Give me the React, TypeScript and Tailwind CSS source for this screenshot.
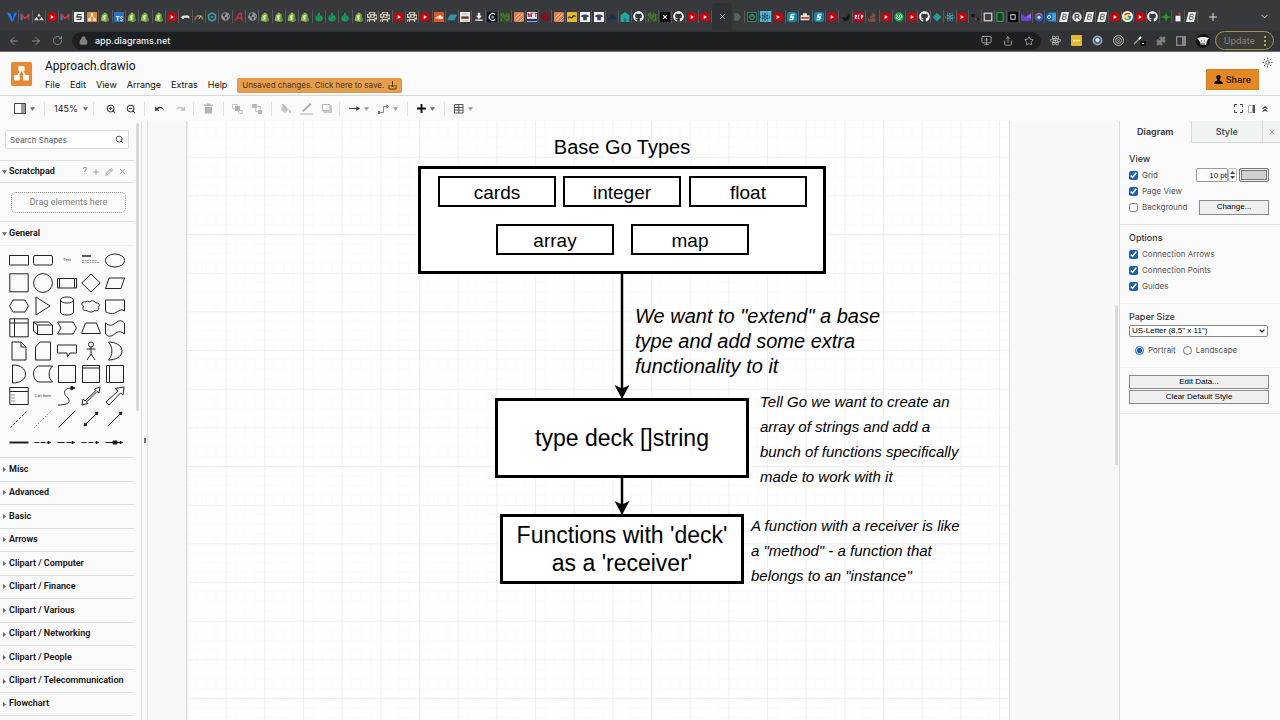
import type { ReactNode } from "react";
import { FaGithub, FaReact, FaSoundcloud, FaStackOverflow, FaGlobeAmericas } from "react-icons/fa";
import { FcGoogle } from "react-icons/fc";
import {
  ArrowLeft, ArrowRight, RotateCw, Lock, X, Plus, ChevronDown, MonitorDown, Share, Star, Puzzle,
  ZoomIn, ZoomOut, Search, Sun, ChevronsUp, Pencil,
} from "lucide-react";

/* ---------- tab favicons ---------- */

const Fav = ({ children }: { children: ReactNode }) => (
  <svg viewBox="0 0 16 16" className="h-[10px] w-[10px] shrink-0" aria-hidden="true">{children}</svg>
);

const favicons: Record<string, ReactNode> = {
  vue: <Fav><path d="M0 1h5l3 7 3-7h5L9 15H7z" fill="#2a7de1" /><path d="M7 3l5-2-4 12z" fill="#0f3f8a" /></Fav>,
  gmail: <Fav><path d="M1 3h3v10H1z" fill="#4c7fe0" /><path d="M12 3h3v10h-3z" fill="#7a4a58" /><path d="M1 2.500l7 5.500 7-5.500V6l-7 5.500L1 6z" fill="#c93d3a" /></Fav>,
  triad: <Fav><path d="M8 2l3 5H5zM4 8l4 5H0zM12 8l4 5H8z" fill="#d6d9da" /></Fav>,
  yt: <Fav><rect y="1" width="16" height="14" rx="5" fill="#bd0a12" /><path d="M6 5l5 3-5 3z" fill="#fff" /></Fav>,
  sq: <Fav><rect width="16" height="16" rx="1" fill="#f1f1f1" /><path d="M12 4H5v4h6v4H4M3 8h10" stroke="#333" strokeWidth="1.6" fill="none" /></Fav>,
  drawio: <Fav><rect width="16" height="16" rx="1" fill="#e4893a" /><path d="M8 5L4.5 11M8 5l3.500 6" stroke="#fff" strokeWidth="1.500" /><path d="M6 2h4v4H6zM2 10h4v4H2zM10 10h4v4h-4z" fill="#fff" /></Fav>,
  shop: <Fav><path d="M3 4h2c.5-3 3-4.500 5-2l2 2 2 10-4 2-9-2z" fill="#86b845" /><path d="M11 3l1 1 2 10-4 2z" fill="#5d8c34" /><path d="M9.500 6.500C6 5 5 8 7 9s1 3.500-2 2" stroke="#fff" strokeWidth="1.700" fill="none" /></Fav>,
  ts: <Fav><rect width="16" height="16" fill="#2f6fbe" /><path d="M3 7.500h6M6 7.500V14M14 8c-3-1.500-4 .5-3 2s3 1 2.500 3-3 1-3.500 0" stroke="#fff" strokeWidth="1.600" fill="none" /></Fav>,
  cat: <Fav><path d="M1 9l3-3 8-1 3 2v3h-2v-1H6v2H4l-1-2z" fill="#e4e6e6" /></Fav>,
  gauge: <Fav><path d="M2 12a6 6 0 0112 0" stroke="#8a9a4a" strokeWidth="2.500" fill="none" /><path d="M2 12a6 6 0 013-5" stroke="#c84040" strokeWidth="2.500" fill="none" /><path d="M8 11l3-5" stroke="#ddd" strokeWidth="1.500" /></Fav>,
  hex: <Fav><path d="M8 1.500l5.500 3.300v6.400L8 14.500l-5.500-3.300V4.800z" fill="none" stroke="#3a9fae" strokeWidth="2.400" /><path d="M6 8h4" stroke="#57bd8c" strokeWidth="2" /></Fav>,
  globe: <FaGlobeAmericas className="h-[9px] w-[9px] shrink-0 text-[#8f9496]" />,
  a: <Fav><path d="M2 14L9 2h2l2 12M4 10h8" stroke="#c32f3b" strokeWidth="2.400" fill="none" /></Fav>,
  pear: <Fav><path d="M7 1h3l-1 4c3 0 5 2 5 5s-2 5-6 5-6-2-6-5 2-4 4-5z" fill="#189a5b" /><path d="M5 8h2M9 11h2" stroke="#0c5b38" strokeWidth="1.500" /></Fav>,
  pixel: <Fav><rect width="16" height="16" fill="#d5d0bf" /><path d="M0 0h3v3H0zM5 1h6v2H5zM13 0h3v4h-3zM2 4h3v3H2zM7 5h3v3H7zM12 6h3v3h-3zM0 9h3v3H0zM4 9h8v2H4zM5 13h6v3H5zM13 12h3v4h-3zM1 13h2v3H1z" fill="#3e3b34" /></Fav>,
  sound: <span className="flex h-[10px] w-[10px] shrink-0 items-center justify-center bg-[#e0562c]"><FaSoundcloud className="h-[8px] w-[8px] text-white" /></span>,
  para: <Fav><path d="M5 4h11l-4 9H0z" fill="#3295a5" /></Fav>,
  host: <Fav><rect width="16" height="16" fill="#ece8e4" /><path d="M2 7h12v4H2z" fill="#6d4038" /><path d="M3 3h10M3 14h10" stroke="#a89c95" /></Fav>,
  down: <Fav><path d="M6 1h4v5h3l-5 5-5-5h3zM2 12h12v2H2z" fill="#f2f2f2" /></Fav>,
  c: <Fav><rect width="16" height="16" fill="#11151c" /><path d="M13 4a5.500 5.500 0 100 8" stroke="#dfe6ee" strokeWidth="2" fill="none" /><circle cx="9" cy="8" r="2.500" fill="#6b8fb3" /></Fav>,
  matrix: <Fav><rect width="16" height="16" fill="#2f4a26" /><path d="M2 2v5M5 1v9M8 4v8M11 2v6M14 3v11M2 10v5M11 11v4" stroke="#5c8c3a" strokeWidth="1.600" /></Fav>,
  stripe: <Fav><rect width="16" height="16" rx="2" fill="#dd7c4e" /><path d="M2 9l7-7M3 14L14 3M9 15l6-6" stroke="#f6d9c5" strokeWidth="1.500" /></Fav>,
  nft: <Fav><rect width="16" height="16" fill="#e9e5ef" /><path d="M0 11h16v4H0z" fill="#2a2f6b" /><path d="M2 8V2l3 6V2M7 8V2h3M12 2h4M14 2v6" stroke="#a3182a" strokeWidth="1.500" fill="none" /></Fav>,
  maroon: <Fav><circle cx="8" cy="8" r="7" fill="#7a1420" /></Fav>,
  yellow: <Fav><rect width="16" height="16" rx="1" fill="#e3b92c" /><path d="M2 10c3-5 5 2 7-2s3-1 5-1" stroke="#30302a" strokeWidth="2" fill="none" /></Fav>,
  phone: <Fav><rect width="16" height="16" fill="#eef0f4" /><path d="M1 7c3-4 11-4 14 0l-3 1H4zM5 8h6v5H5z" fill="#3c4560" /></Fav>,
  cloud: <Fav><path d="M1 12V9l3-1 3-3 4 1 4 3v3z" fill="#1c2b57" /></Fav>,
  house: <Fav><path d="M8 0l7 5v11H1V5z" fill="#1fa9a0" /><path d="M6 10h4v6H6z" fill="#137a76" /></Fav>,
  git: <FaGithub className="h-[11px] w-[11px] shrink-0 text-[#f2f3f3]" />,
  x: <Fav><rect width="16" height="16" fill="#050505" /><path d="M5 5l6 6M11 5l-6 6" stroke="#fff" strokeWidth="2" /></Fav>,
  d: <Fav><path d="M2 2h6l5 6-5 6H2z" fill="#5c6062" /></Fav>,
  openai: <Fav><rect x=".7" y=".7" width="14.600" height="14.600" fill="#1e3a33" stroke="#3f8b6c" strokeWidth="1.200" /><path d="M8 4l3.500 2v4L8 12l-3.500-2V6zM8 8V4" fill="none" stroke="#58ad8a" strokeWidth="1.300" /></Fav>,
  reactBox: <span className="flex h-[11px] w-[11px] shrink-0 items-center justify-center bg-[#57b4cf]"><FaReact className="h-[10px] w-[10px] text-[#143b4c]" /></span>,
  react: <FaReact className="h-[10px] w-[10px] shrink-0 text-[#57b4c8]" />,
  s: <Fav><rect width="16" height="16" rx="4" fill="#1685ae" /><path d="M12 4H7L6 8h4l-1 4H4" stroke="#fff" strokeWidth="2.200" fill="none" /></Fav>,
  brief: <Fav><path d="M5 2h6v3h4v8H1V5h4z" fill="#e4e0da" /><path d="M2 8h12v3H2z" fill="#b7513e" /></Fav>,
  bird: <Fav><path d="M1 8l6 1 6-6 2 2-3 7-6 3z" fill="#15181a" /></Fav>,
  rcp: <Fav><rect width="16" height="16" fill="#a80e21" /><path d="M2 11V5h2v3H2l2 3M9 5H7v6h2M12 11V5h2v3h-2" stroke="#fff" strokeWidth="1.300" fill="none" /></Fav>,
  so: <FaStackOverflow className="h-[10px] w-[10px] shrink-0 text-[#b5603a]" />,
  swirl: <Fav><circle cx="8" cy="8" r="7.500" fill="#21a851" /><path d="M4 4c2 7 8 8 8 3s-5-2-3 1M4 8c0 3 3 5 6 4" stroke="#e4f6e8" strokeWidth="1.500" fill="none" /></Fav>,
  diamond: <Fav><path d="M8 1l7 7-7 7-7-7z" fill="#2a9a94" /></Fav>,
  darkx: <Fav><path d="M2 3h5v5H2zM9 9h5v4H9z" fill="#151515" /><path d="M8 9h3v4H8z" fill="#8a4c32" /></Fav>,
  frame: <Fav><rect x="2" y="2" width="12" height="12" fill="#3f3f40" stroke="#d8d8d6" strokeWidth="2" /></Fav>,
  green: <Fav><rect x="3" y="1" width="10" height="14" rx="1" fill="#1d3b25" stroke="#2f9a4e" strokeWidth="2" /></Fav>,
  blacksq: <Fav><rect width="16" height="16" fill="#070707" /><rect x="4.500" y="4.500" width="7" height="7" fill="none" stroke="#ddd" strokeWidth="1.500" /></Fav>,
  purple: <Fav><path d="M0 2l8 6 8-6v12H0z" fill="#6a45d6" /><path d="M8 8l8-6v8z" fill="#9a6bf0" /></Fav>,
  orb: <Fav><circle cx="8" cy="8" r="7" fill="#3c5cb8" /><path d="M3 5a6 6 0 0110 0" stroke="#c8656a" strokeWidth="2" fill="none" /><circle cx="8" cy="8.500" r="2.500" fill="#d6d9f2" /></Fav>,
  outlook: <Fav><rect x="4" y="1" width="12" height="14" fill="#3aa0e6" /><rect y="3" width="10" height="10" fill="#0f63b8" /><circle cx="5" cy="8" r="2.500" fill="none" stroke="#fff" strokeWidth="1.600" /></Fav>,
  slant: <Fav><path d="M4 0h12l-3 16H0z" fill="#eceded" /><path d="M6.500 3.500H11c1.500 0 1 4-1 4H6M5.500 12H9c3 0 3-4.500 1-4.500M7 3.500L5 12" stroke="#44484a" strokeWidth="1.300" fill="none" /></Fav>,
  r: <Fav><circle cx="8" cy="8" r="7.500" fill="#e6e7e7" /><path d="M5 12V4h4c3 0 3 4 0 4H5M9 8l3 4" stroke="#333" strokeWidth="1.800" fill="none" /></Fav>,
  google: <span className="flex h-[11px] w-[11px] shrink-0 items-center justify-center rounded-full bg-white"><FcGoogle className="h-[9px] w-[9px]" /></span>,
  cross: <Fav><rect width="16" height="16" rx="2" fill="#1f4424" /><path d="M8 1v14M1 8h14" stroke="#4f9b4f" strokeWidth="1.600" /><circle cx="8" cy="8" r="3" fill="none" stroke="#4f9b4f" /></Fav>,
  bottle: <Fav><rect x="4" y="6" width="8" height="9" fill="#f0f0f0" /><path d="M8 1h4v4H8z" fill="#b3362c" /></Fav>,
};

const tabsA = "vue gmail triad yt gmail sq drawio shop ts shop shop shop yt cat gauge hex globe a globe shop shop shop shop pear pear pear shop pixel pixel yt pixel yt sound para host down c matrix stripe nft maroon stripe yellow phone phone cloud house git matrix x git yt yt".split(" ");
const tabsB = "d openai reactBox yt s brief s yt bird rcp so yt".split(" ");
const tabsC = "swirl yt git diamond react yt darkx frame green blacksq purple orb outlook slant r slant slant yt google yt git cross bottle slant".split(" ");

const TabGroup = ({ names, grow }: { names: string[]; grow: string }) => (
  <div className={`flex min-w-0 ${grow}`}>
    {names.map((n, i) => (
      <div key={i} className="flex h-[13px] min-w-0 flex-1 items-center justify-center border-r border-[#55595b]">{favicons[n]}</div>
    ))}
  </div>
);

const BrowserChrome = () => (
  <div className="shrink-0 bg-[#37393c]">
    <div className="flex h-[30px] items-center px-[6px] pt-[3px]">
      <TabGroup names={tabsA} grow="flex-[706]" />
      <div className="flex flex-[20] justify-center self-stretch rounded-t bg-[#2f3134]">
        <button aria-label="Close tab" className="text-[#c9cccd]"><X size={9} /></button>
      </div>
      <TabGroup names={tabsB} grow="flex-[161]" />
      <TabGroup names={tabsC} grow="flex-[305]" />
      <div className="flex flex-[76] items-center justify-between text-[#dfe1e2]">
        <button aria-label="New tab" className="ml-[9px]"><Plus size={12} /></button>
        <button aria-label="Tab search" className="mr-[4px]"><ChevronDown size={11} /></button>
      </div>
    </div>
    <div className="flex h-[22px] items-center border-b border-[#6b6b6d] bg-[#323336] pr-[6px] pl-[8px] text-[#8c8f91]">
      <button aria-label="Back" className="w-[22px]"><ArrowLeft size={12} /></button>
      <button aria-label="Forward" className="w-[22px]"><ArrowRight size={12} /></button>
      <button aria-label="Reload" className="w-[20px]"><RotateCw size={11} /></button>
      <div className="flex h-[18px] flex-1 items-center rounded-full bg-[#1c2022] px-[7px]">
        <Lock size={9} fill="#7c8082" />
        <span className="ml-[7px] flex-1 text-[9px] font-medium text-[#eceeef]">app.diagrams.net</span>
        <span className="flex items-center gap-[11px] text-[#a9acad]">
          <MonitorDown size={11} /><Share size={10} /><Star size={10} />
        </span>
      </div>
      <div className="ml-[9px] flex items-center gap-[10px]">
        <FaReact size={11} className="text-[#e0e0e0]" />
        <svg width="11" height="11" viewBox="0 0 11 11"><rect width="11" height="11" rx="1" fill="#e0b92f" /><path d="M2 5.500h7" stroke="#fff1b8" strokeWidth="1.500" strokeDasharray="2 .6" /></svg>
        <svg width="11" height="11" viewBox="0 0 11 11"><circle cx="5.500" cy="5.500" r="5" fill="#9aa2ab" /><circle cx="5.500" cy="5.500" r="3.500" fill="#3e7099" /><circle cx="5.500" cy="5" r="2" fill="#e8eef2" /></svg>
        <svg width="11" height="11" viewBox="0 0 11 11" fill="none" stroke="#b1b3b4"><circle cx="5.500" cy="5.500" r="5" /><circle cx="5.500" cy="5.500" r="3" /><circle cx="5.500" cy="5.500" r="1" /></svg>
        <svg width="12" height="11" viewBox="0 0 12 11"><path d="M0 9l6-6" stroke="#9a9c9e" strokeWidth="1.500" /><path d="M5 4l2-2" stroke="#fff" strokeWidth="2" /><rect x="6" y="6" width="6" height="5" rx="1" fill="#131415" /><path d="M8 8.500h2" stroke="#ccc" /></svg>
        <Puzzle size={10} fill="#7d8082" className="text-[#7d8082]" />
        <svg width="10" height="10" viewBox="0 0 10 10"><rect x=".7" y=".7" width="8.600" height="8.600" fill="none" stroke="#85888a" strokeWidth="1.400" /><path d="M6 1h3v8H6z" fill="#85888a" /></svg>
        <svg width="14" height="14" viewBox="0 0 14 14"><circle cx="7" cy="7" r="7" fill="#111" /><path d="M1 4l4-1h4l4 1-2 3-1 4H5L4 8z" fill="#e9e9e9" /><path d="M5 7h1M8 7h1M5 10h4" stroke="#222" /></svg>
      </div>
      <button className="ml-[5px] flex h-[19px] items-center gap-[9px] rounded-full border border-[#a3964f] bg-[#3b3a36] pr-[7px] pl-[8px] text-[9px] font-medium text-[#7d7f80]">
        Update
        <svg width="2" height="10" viewBox="0 0 2 10" fill="#e3ce62"><circle cx="1" cy="1" r="1" /><circle cx="1" cy="5" r="1" /><circle cx="1" cy="9" r="1" /></svg>
      </button>
    </div>
  </div>
);

/* ---------- application header and toolbar ---------- */

const Header = () => (
  <header className="flex h-[43px] shrink-0 items-start bg-[#fafafa] pl-[11px]">
    <svg viewBox="0 0 21 24" className="mt-[10px] h-[24px] w-[21px]" role="img" aria-label="draw.io">
      <rect width="21" height="24" rx="1.500" fill="#e48a33" />
      <path d="M10.500 7L6 16M10.500 7l4.500 9" stroke="#fff" strokeWidth="1.500" />
      <g fill="#fff"><rect x="7.500" y="4" width="6" height="5.500" rx="1" /><rect x="3" y="13" width="6" height="5.500" rx="1" /><rect x="12" y="13" width="6" height="5.500" rx="1" /></g>
    </svg>
    <div className="ml-[13px] flex flex-1 flex-col">
      <h1 className="mt-[5px] h-[18px] font-[Roboto,sans-serif] text-[12px] leading-[18px] text-[#111]">Approach.drawio</h1>
      <div className="flex h-[20px] items-center">
        <nav className="flex gap-[10px] text-[9px] text-[#111]">
          {["File", "Edit", "View", "Arrange", "Extras", "Help"].map((m) => <button key={m}>{m}</button>)}
        </nav>
        <button className="ml-[10px] flex h-[15px] items-center gap-[4px] rounded-[2px] border border-[#dc9648] bg-[#e59f4f] px-[4px] text-[8px] text-[#4d3414]">
          Unsaved changes. Click here to save.
          <svg width="9" height="9" viewBox="0 0 9 9" fill="none" stroke="#5a3b12"><path d="M1 4v4h7V4M4.500 0v6M2.500 4l2 2 2-2" /></svg>
        </button>
      </div>
    </div>
    <button className="mt-[17px] mr-[3px] flex h-[21px] items-center gap-[3px] rounded-[1px] border border-[#cf7d22] bg-[#e58824] px-[7px] text-[9px] font-semibold text-[#2e1a04]">
      <svg width="9" height="9" viewBox="0 0 9 9"><path d="M4.500 0C6 0 6.800 1 6.600 2.500 6.500 3.800 5.800 4.400 5.600 5c0 1 3.400 1 3.400 4H0c0-3 3.400-3 3.400-4-.2-.6-.9-1.200-1-2.500C2.200 1 3 0 4.500 0z" /></svg>
      Share
    </button>
    <button aria-label="Appearance" className="mt-[5px] mr-[7px] text-[#555]"><Sun size={11} /></button>
  </header>
);

const Caret = ({ dim = false }: { dim?: boolean }) => (
  <svg width="5" height="4" viewBox="0 0 6 4" className={dim ? "shrink-0 text-[#9a9a9a]" : "shrink-0 text-[#666]"}><path d="M0 0h6L3 4z" fill="currentColor" /></svg>
);

const Group = ({ width, children }: { width: string; children: ReactNode }) => (
  <div className={`flex h-[14px] items-center justify-center border-r border-[#e2e4e5] ${width}`}>{children}</div>
);

const Tool = ({ label, children }: { label: string; children: ReactNode }) => (
  <button aria-label={label} className="flex items-center justify-center gap-[4px]">{children}</button>
);

const Toolbar = () => (
  <div className="flex h-[26px] shrink-0 items-center border-t border-[#d3dbdd] bg-[#fafafa] text-[#333]">
    <Group width="w-[45px] pl-[4px]">
      <Tool label="Panels">
        <svg width="12" height="11" viewBox="0 0 12 11"><path d="M.5.5h11v10H.5zM8 .5v10" fill="none" stroke="#444" /><path d="M8 1h3v9H8z" fill="#999" /></svg><Caret />
      </Tool>
    </Group>
    <Group width="w-[49px] pl-[4px]"><button className="flex items-center gap-[5px] text-[9px] text-[#222]">145%<Caret /></button></Group>
    <Group width="w-[51px] gap-[10px] pl-[4px]">
      <Tool label="Zoom in"><ZoomIn size={10} strokeWidth={2.500} /></Tool>
      <Tool label="Zoom out"><ZoomOut size={10} strokeWidth={2.500} /></Tool>
    </Group>
    <Group width="w-[49px] gap-[10px] pl-[2px]">
      <Tool label="Undo"><svg width="10" height="7" viewBox="0 0 11 7"><path d="M0 1v5h5L3.300 4.300C5 2.500 8 2.500 10 6 9.500 1.500 5 0 2 3z" fill="#444" /></svg></Tool>
      <Tool label="Redo"><svg width="10" height="7" viewBox="0 0 11 7"><path d="M11 1v5H6l1.700-1.700C6 2.500 3 2.500 1 6 1.500 1.500 6 0 9 3z" fill="#c4c4c4" /></svg></Tool>
    </Group>
    <Group width="w-[30px]"><Tool label="Delete"><svg width="9" height="11" viewBox="0 0 10 11" fill="#b5b5b5"><path d="M3 0h4v1h3v1.500H0V1h3zM1 3.500h8V11H1z" /></svg></Tool></Group>
    <Group width="w-[48px] gap-[9px]">
      <Tool label="To front"><svg width="11" height="10" viewBox="0 0 11 10"><path d="M.5.500h5v4h-5zM6.500 6.500h4v3h-4z" fill="none" stroke="#ccc" /><path d="M3 2h5v5H3z" fill="#b2b2b2" /></svg></Tool>
      <Tool label="To back"><svg width="11" height="10" viewBox="0 0 11 10"><path d="M3.500 2.500h5v5h-5z" fill="none" stroke="#ccc" /><path d="M0 0h5v4H0zM6 6h4v4H6z" fill="#b8b8b8" /></svg></Tool>
    </Group>
    <Group width="w-[68px] gap-[9px]">
      <Tool label="Fill colour"><svg width="11" height="10" viewBox="0 0 11 10"><path d="M4 1l5 4.500L5 9 .5 5.500z" fill="#c4c4c4" /><path d="M2 0l4 4M10 6v3" stroke="#b0b0b0" strokeWidth="1.300" /></svg></Tool>
      <Tool label="Line colour"><svg width="13" height="12" viewBox="0 0 13 12"><path d="M2 8l8-8 1.500 1.500-8 7.500z" fill="#aaa" /><path d="M0 11h13" stroke="#c8c8c8" strokeWidth="1.500" /></svg></Tool>
      <Tool label="Shadow"><svg width="10" height="9" viewBox="0 0 10 9"><path d="M1.500 1.500H10V9H1.500z" fill="#ccc" /><path d="M.5.500h7.500v6H.5z" fill="#fafafa" stroke="#b5b5b5" /></svg></Tool>
    </Group>
    <Group width="w-[68px] gap-[9px]">
      <Tool label="Connection"><svg width="11" height="7" viewBox="0 0 12 7"><path d="M0 3.500h10" stroke="#444" strokeWidth="1.200" /><path d="M8 1l4 2.500L8 6z" fill="#333" /></svg><Caret dim /></Tool>
      <Tool label="Waypoints"><svg width="11" height="10" viewBox="0 0 11 10"><path d="M1 8.500h4.500v-6H10" fill="none" stroke="#888" /><path d="M0 7h2v3H0zM8.500 0L11 2.500 8.500 5z" fill="#777" /></svg><Caret dim /></Tool>
    </Group>
    <Group width="w-[37px]"><Tool label="Insert"><svg width="9" height="9" viewBox="0 0 9 9"><path d="M4.500 0v9M0 4.500h9" stroke="#000" strokeWidth="1.800" /></svg><Caret /></Tool></Group>
    <div className="flex w-[36px] justify-center">
      <Tool label="Table"><svg width="10" height="10" viewBox="0 0 10 10"><path d="M.5.500h8.500V9H.5zM.5 3.500H9M.5 6.200H9M4.800.5V9" fill="none" stroke="#555" /></svg><Caret dim /></Tool>
    </div>
    <div className="ml-auto flex items-center gap-[5px] pr-[10px] text-[#444]">
      <Tool label="Fullscreen"><svg width="9" height="9" viewBox="0 0 9 9" fill="none" stroke="#444"><path d="M.5 3V.5H3M6 .5h2.500V3M8.500 6v2.500H6M3 8.500H.5V6" /></svg></Tool>
      <Tool label="Format"><svg width="7" height="8" viewBox="0 0 7 8"><path d="M.5.500h4v7h-4z" fill="none" stroke="#aaa" /><path d="M5 0h2v8H5z" fill="#555" /></svg></Tool>
      <Tool label="Collapse"><ChevronsUp size={10} strokeWidth={2.500} /></Tool>
    </div>
  </div>
);

/* ---------- shapes sidebar ---------- */

const T = "text";
const shapes: [string, ReactNode][] = [
  ["Rectangle", <path d="M.5 5.500h19v9.500H.5z" />],
  ["Rounded Rectangle", <rect x=".5" y="5.500" width="19" height="9.500" rx="1.500" />],
  ["Text", T],
  ["Textbox", <><path d="M1 6h9" strokeWidth="1.500" /><path d="M1 10.500h15M1 12.500h17" stroke="#999" strokeDasharray="2 .5" /></>],
  ["Ellipse", <ellipse cx="10" cy="10.500" rx="9.700" ry="6.500" />],
  ["Square", <path d="M.8.8h18.400v18H.8z" />],
  ["Circle", <circle cx="10" cy="10" r="9.400" />],
  ["Process", <path d="M.5 5.500h19v9.500H.5zM2.500 5.500V15M17.500 5.500V15" />],
  ["Diamond", <path d="M10 1l9.300 9L10 19 .7 10z" />],
  ["Parallelogram", <path d="M4 5h15.500L16 15.500H.5z" />],
  ["Hexagon", <path d="M4 4h12l3.500 6-3.500 6H4L.5 10z" />],
  ["Triangle", <path d="M3 1l14 9-14 9z" />],
  ["Cylinder", <path d="M3.500 4v12c0 4 13 4 13 0V4c0-4-13-4-13 0 0 4 13 4 13 0" />],
  ["Cloud", <path d="M5 6C1 5-1 9 3 10.500c-3 2 0 5 3 4 2 2 6 2 7.500 0 3 1 5-1 3.500-3 3-2 1-5-2-4.500-2-3-5-2.500-6-1-2-1-4-1-4 0z" />],
  ["Document", <path d="M.5 4h19v11c-5-4-8 4-14 2.500-2-.5-4-1-5-2z" />],
  ["Internal Storage", <path d="M.8.8h18.400v18H.8zM.8 5h18.400M5.500.8v18" />],
  ["Cube", <path d="M.5 4h15l4 3v9.500h-15L.5 13zM.5 4l4 3v9.500M4.500 7h15" />],
  ["Step", <path d="M.5 4H16l3.500 6L16 16H.5L4 10z" />],
  ["Trapezoid", <path d="M4.500 5h11L19.500 15.500H.5z" />],
  ["Tape", <path d="M.5 5c4 3 6 3 10 0s6-3 9 0v11c-4-3-6-3-10 0s-6 3-9 0z" />],
  ["Note", <path d="M3 1h9l5 5v13H3zM12 1v5h5" />],
  ["Card", <path d="M7 1h10.500v18h-15V6z" />],
  ["Callout", <path d="M.5 4h19v8H13l-2.500 4-.5-4H.5z" />],
  ["Actor", <><circle cx="10" cy="3.500" r="2.500" /><path d="M10 6v7M5.500 8h9M10 13l-4 6M10 13l4 6" /></>],
  ["Or", <path d="M3.500 1C10 1 17 4 17 10s-7 9-13.500 9C8 14 8 6 3.500 1z" />],
  ["And", <path d="M3.500 1C12 1 16.500 5 16.500 10s-4.500 9-13 9z" />],
  ["Data Storage", <path d="M5 2h14.500c-4.500 4-4.500 12 0 16H5C-1 15-1 5 5 2z" />],
  ["Container", <path d="M1.500 1.500h17v17h-17z" />],
  ["Horizontal Container", <path d="M1.500 1.500h17v17h-17zM1.500 4h17" />],
  ["Vertical Container", <path d="M1.500 1.500h17v17h-17zM4.500 1.500v17" />],
  ["List", <><path d="M.8 1.500h18.400v17H.8zM.8 5.500h18.400" /><path d="M2 9h4M2 12h4M2 15h4" stroke="#999" /></>],
  ["List Item", T],
  ["Curve", <><path d="M1 19c12 0 13-4 9-8s-4-9 6-9" /><path d="M14 0l4 2-4 2z" fill="#111" /></>],
  ["Bidirectional Arrow", <path d="M1 19l1-6 2 2L15 4.500 13.500 3 19 1l-1 6-2-1.500L5.500 16l1.500 1.500z" />],
  ["Arrow", <path d="M1 16L13 5l-3-2.500L19 1l-1 8-2.500-2L4 19z" />],
  ["Dashed Line", <path d="M1.500 18.500l17-17" strokeDasharray="2.500 1.500" />],
  ["Dotted Line", <path d="M1.500 18.500l17-17" strokeDasharray="1 1.500" stroke="#777" />],
  ["Line", <path d="M1.500 18.500l17-17" />],
  ["Bidirectional Connector", <><path d="M4 16l12-12" /><path d="M3 17l.8-3 2.200 2.200zM17 3l-.8 3L14 3.800z" fill="#111" /></>],
  ["Directional Connector", <><path d="M3 17L15 5" /><path d="M17 3l-.8 3L14 3.800z" fill="#111" /></>],
  ["Link", <path d="M.5 10.500h19" strokeWidth="2" />],
  ["Connector Label", <><path d="M1.500 10.500h15" strokeDasharray="5 1" /><path d="M15 9.500l3 1-3 1z" fill="#111" /></>],
  ["Connector Two Labels", <><path d="M.5 10.500h16" strokeDasharray="7 2" /><path d="M15 9.500l3 1-3 1z" fill="#111" /></>],
  ["Connector Three Labels", <><path d="M.5 10.500h16" strokeDasharray="5 2" /><path d="M15 9.500l3 1-3 1z" fill="#111" /></>],
  ["Connector Symbol", <><path d="M.5 10.500h16" /><path d="M8 9h4v3H8zM15 9.500l3 1-3 1z" fill="#111" /></>],
];

const sections = ["Misc", "Advanced", "Basic", "Arrows", "Clipart / Computer", "Clipart / Finance", "Clipart / Various", "Clipart / Networking", "Clipart / People", "Clipart / Telecommunication", "Flowchart"];

const Sidebar = () => (
  <aside className="relative flex w-[142px] shrink-0 flex-col overflow-hidden border-r border-[#dedede] bg-[#fafafa] pr-[7px] font-[Roboto,sans-serif] text-[9px] text-[#111]">
    <div className="h-[39px] shrink-0 pt-[9px] pr-[5px] pl-[5px]">
      <label className="flex h-[19px] items-center rounded-[2px] border border-[#d8d8d8] bg-white px-[4px]">
        <input aria-label="Search shapes" placeholder="Search Shapes" className="w-full min-w-0 font-[Inter,sans-serif] text-[8px] outline-none placeholder:text-[#555]" />
        <Search size={9} strokeWidth={2.500} className="shrink-0 text-[#444]" />
      </label>
    </div>
    <div className="flex h-[23px] shrink-0 items-center border-y border-[#dfdfdf] pr-[7px]">
      <button className="flex flex-1 items-center gap-[2px] pl-[2px] font-semibold"><Caret />Scratchpad</button>
      <span className="flex items-center gap-[5px] text-[#777]">
        <button aria-label="Help">?</button>
        <button aria-label="Add"><Plus size={8} /></button>
        <button aria-label="Edit"><Pencil size={8} /></button>
        <button aria-label="Close"><X size={9} /></button>
      </span>
    </div>
    <div className="h-[38px] shrink-0 pt-[9px] pr-[8px] pl-[11px]">
      <div className="flex h-[21px] items-center justify-center rounded-[5px] border border-dotted border-[#8d8d8d] text-[#808080]">Drag elements here</div>
    </div>
    <button className="flex h-[25px] shrink-0 items-center gap-[2px] border-y border-t-[#dfdfdf] border-b-[#efefef] pl-[2px] font-semibold"><Caret />General</button>
    <div className="h-[211px] shrink-0 pt-[3px] pr-[7px] pl-[7px]">
      <div className="grid h-[204px] grid-cols-5 grid-rows-9">
        {shapes.map(([name, art]) => (
          <button key={name} aria-label={name} title={name} className="flex items-center justify-center">
            {art === T
              ? <span className="text-[4px] leading-[4px] text-[#333]">{name}</span>
              : <svg viewBox="0 0 20 20" className="h-[20px] w-[20px]" fill="none" stroke="#222" strokeWidth="1">{art}</svg>}
          </button>
        ))}
      </div>
    </div>
    <ul className="grid h-[259px] shrink-0 grid-rows-11">
      {sections.map((s) => (
        <li key={s} className="flex border-t border-[#dfdfdf] last:border-b">
          <button className="flex items-center gap-[3px] pl-[3px] font-semibold whitespace-nowrap">
            <svg width="3" height="5" viewBox="0 0 3 5"><path d="M0 0l3 2.500L0 5z" fill="#666" /></svg>{s}
          </button>
        </li>
      ))}
    </ul>
    <div className="absolute top-[2px] right-[2px] h-[288px] w-[3px] rounded-full bg-[#d9d9d9]" />
  </aside>
);

/* ---------- diagram canvas ---------- */

const Node = ({ at, children }: { at: string; children?: ReactNode }) => (
  <div className={`absolute flex items-center justify-center border-black bg-white text-center ${at}`}>{children}</div>
);

const TypeNode = ({ at, children }: { at: string; children: ReactNode }) => (
  <Node at={`h-[31px] w-[118px] border-2 pt-[3px] text-[19px] ${at}`}>{children}</Node>
);

const Canvas = () => (
  <main className="relative min-w-0 flex-1 overflow-hidden bg-[#f8f8f8] pl-[38px]">
    <div className="relative h-full w-[824px] overflow-hidden border-x border-[#dddddd] bg-white font-['Liberation_Sans',Helvetica,sans-serif] text-black">
      <svg className="absolute inset-0 h-full w-full" aria-hidden="true">
        <defs>
          <pattern id="grid" width="38.67" height="38.67" patternUnits="userSpaceOnUse" y="-3">
            <path d="M9.670 0v38.670M19.330 0v38.670M29 0v38.670M0 9.670h38.670M0 19.330h38.670M0 29h38.670" stroke="#fafafa" />
            <path d="M.5 0v38.670M0 .5h38.670" stroke="#efefef" />
          </pattern>
        </defs>
        <rect width="100%" height="100%" fill="url(#grid)" />
      </svg>

      <p className="absolute top-[14px] left-[331px] w-[208px] text-center text-[20px] leading-[24px]">Base Go Types</p>
      <Node at="left-[231px] top-[45px] h-[108px] w-[408px] border-3" />
      <TypeNode at="left-[251px] top-[55px]">cards</TypeNode>
      <TypeNode at="left-[376px] top-[55px]">integer</TypeNode>
      <TypeNode at="left-[502px] top-[55px]">float</TypeNode>
      <TypeNode at="left-[309px] top-[103px]">array</TypeNode>
      <TypeNode at="left-[444px] top-[103px]">map</TypeNode>

      <svg className="absolute top-[152px] left-[426px] h-[126px] w-[18px]" viewBox="0 0 18 126">
        <path d="M9 0v116" stroke="#000" strokeWidth="2.500" /><path d="M9 126L1.500 112 9 115.500l7.500-3.500z" />
      </svg>
      <svg className="absolute top-[356px] left-[426px] h-[38px] w-[18px]" viewBox="0 0 18 38">
        <path d="M9 0v28" stroke="#000" strokeWidth="2.500" /><path d="M9 38L1.500 24 9 27.500l7.500-3.500z" />
      </svg>

      <Node at="left-[308px] top-[277px] h-[80px] w-[254px] border-3 text-[23px]">type deck []string</Node>
      <Node at="left-[313px] top-[393px] h-[70px] w-[244px] border-3 text-[23px] leading-[28px]">Functions with &#39;deck&#39;<br />as a &#39;receiver&#39;</Node>

      <p className="absolute top-[183px] left-[448px] text-[20px] leading-[25px] whitespace-nowrap italic">We want to &quot;extend&quot; a base<br />type and add some extra<br />functionality to it</p>
      <p className="absolute top-[268px] left-[573px] text-[15px] leading-[25px] whitespace-nowrap italic">Tell Go we want to create an<br />array of strings and add a<br />bunch of functions specifically<br />made to work with it</p>
      <p className="absolute top-[392px] left-[564px] text-[15px] leading-[25px] whitespace-nowrap italic">A function with a receiver is like<br />a &quot;method&quot; - a function that<br />belongs to an &quot;instance&quot;</p>
    </div>
    <div className="absolute top-[184px] right-[1px] h-[160px] w-[3px] rounded-full bg-[#dadada]" />
  </main>
);

/* ---------- format panel ---------- */

const Check = ({ label, checked = false }: { label: string; checked?: boolean }) => (
  <label className="flex h-[16px] items-center gap-[4px]">
    <input type="checkbox" defaultChecked={checked} className="h-[9px] w-[9px] accent-[#1d5fb8]" />{label}
  </label>
);

const control = "font-['Liberation_Sans',Arial,sans-serif] text-[8px] text-black";
const btn = "flex items-center justify-center border border-[#8a8a8a] bg-[#efefef]";

const SectionTitle = ({ children }: { children: ReactNode }) => (
  <h2 className="h-[16px] text-[9px] leading-[16px] font-medium text-[#333]">{children}</h2>
);

const FormatPanel = () => (
  <aside className="flex w-[161px] shrink-0 flex-col border-l border-[#d9dcdd] bg-[#fafafa] text-[8px] text-[#555]">
    <div className="flex h-[22px] shrink-0 text-[9px] font-semibold">
      <button className="flex-1 text-[#333]">Diagram</button>
      <button className="flex-1 border-b border-l border-[#d5dadc] bg-[#eff3f4] text-[#555]">Style</button>
      <button aria-label="Close panel" className="flex w-[18px] items-center justify-center border-b border-l border-[#d5dadc] bg-[#eff3f4] text-[#999]"><X size={8} /></button>
    </div>
    <section className="h-[82px] border-b border-[#dfe2e3] pt-[8px] pr-[11px] pl-[9px]">
      <SectionTitle>View</SectionTitle>
      <div className="flex items-center">
        <div className="flex-1"><Check label="Grid" checked /></div>
        <input aria-label="Grid size" defaultValue="10 pt" className={`${control} h-[14px] w-[32px] rounded-[2px] border border-[#999] bg-white text-right`} />
        <span className="mr-[2px] flex h-[14px] w-[9px] flex-col items-center justify-center gap-[2px] rounded-[2px] border border-[#bbb] bg-white">
          <button aria-label="Increase"><svg className="block" width="5" height="3" viewBox="0 0 5 3"><path d="M0 3l2.500-3L5 3z" fill="#444" /></svg></button>
          <button aria-label="Decrease"><svg className="block" width="5" height="3" viewBox="0 0 5 3"><path d="M0 0l2.500 3L5 0z" fill="#444" /></svg></button>
        </span>
        <button aria-label="Grid colour" className="h-[14px] w-[30px] rounded-[2px] border border-[#777] bg-[#efefef] p-[1px]"><span className="block h-full border border-[#777] bg-[#d0d0d0]" /></button>
      </div>
      <Check label="Page View" checked />
      <div className="flex items-center justify-between">
        <Check label="Background" />
        <button className={`${btn} ${control} h-[15px] w-[70px]`}>Change...</button>
      </div>
    </section>
    <section className="h-[79px] border-b border-[#ededed] pt-[5px] pl-[9px]">
      <SectionTitle>Options</SectionTitle>
      <Check label="Connection Arrows" checked />
      <Check label="Connection Points" checked />
      <Check label="Guides" checked />
    </section>
    <section className="h-[64px] border-b border-[#ededed] pt-[5px] pr-[12px] pl-[9px]">
      <SectionTitle>Paper Size</SectionTitle>
      <div className="relative">
        <select aria-label="Paper size" className={`${control} block h-[12px] w-full appearance-none rounded-[2px] border border-[#888] bg-white pl-[2px] leading-[10px]`}>
          <option>US-Letter (8,5&quot; x 11&quot;)</option>
        </select>
        <ChevronDown size={8} strokeWidth={3.500} className="pointer-events-none absolute top-[2px] right-[2px] text-black" />
      </div>
      <div className="flex h-[26px] items-center gap-[7px] pl-[6px]">
        <label className="flex items-center gap-[4px]"><input type="radio" name="orientation" defaultChecked className="h-[9px] w-[9px] accent-[#1d5fb8]" />Portrait</label>
        <label className="flex items-center gap-[4px]"><input type="radio" name="orientation" className="h-[9px] w-[9px]" />Landscape</label>
      </div>
    </section>
    <section className="flex h-[46px] flex-col gap-[1px] border-b border-[#ededed] pt-[7px] pr-[11px] pl-[9px]">
      <button className={`${btn} ${control} h-[14px]`}>Edit Data...</button>
      <button className={`${btn} ${control} h-[14px]`}>Clear Default Style</button>
    </section>
  </aside>
);

export default function App() {
  return (
    <div className="flex h-screen flex-col overflow-hidden font-[Inter,sans-serif]">
      <BrowserChrome />
      <Header />
      <Toolbar />
      <div className="flex min-h-0 flex-1">
        <Sidebar />
        <div className="flex w-[6px] shrink-0 flex-col items-center border-r border-[#e4e4e4] bg-[#fafafa]">
          <span className="mt-[317px] h-[5px] w-[2px] bg-[#777]" />
        </div>
        <Canvas />
        <FormatPanel />
      </div>
    </div>
  );
}
